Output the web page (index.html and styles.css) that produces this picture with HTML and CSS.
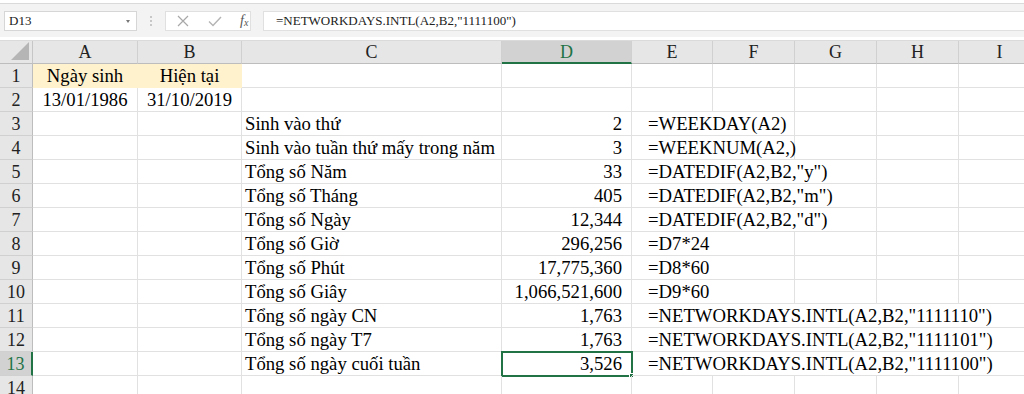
FILE: index.html
```html
<!DOCTYPE html>
<html>
<head>
<meta charset="utf-8">
<link rel="stylesheet" href="styles.css">
</head>
<body>
<div class="toolbar">
  <div class="namebox"><span class="nb-text">D13</span><span class="nb-arrow"></span></div>
  <div class="dots"><i></i><i></i><i></i></div>
  <div class="fxgroup">
    <svg class="ic" width="14" height="14" viewBox="0 0 14 14"><path d="M2 2L12 12M12 2L2 12" stroke="#a8a8a8" stroke-width="1.2" fill="none"/></svg>
    <svg class="ic" width="16" height="14" viewBox="0 0 16 14"><path d="M2 7.5L6 11.5L14 3" stroke="#b4b4b4" stroke-width="1.4" fill="none"/></svg>
    <span class="fx">f<sub>x</sub></span>
  </div>
  <div class="formula">=NETWORKDAYS.INTL(A2,B2,"1111100")</div>
</div>
<div class="sheet">
  <div class="corner"><span class="tri"></span></div>
  <div class="hdr">A</div><div class="hdr">B</div><div class="hdr">C</div><div class="hdr hsel">D</div><div class="hdr">E</div><div class="hdr">F</div><div class="hdr">G</div><div class="hdr">H</div><div class="hdr">I</div>

  <div class="rh">1</div><div class="c ctr fill">Ngày sinh</div><div class="c ctr fill">Hiện tại</div><div class="c"></div><div class="c"></div><div class="c"></div><div class="c"></div><div class="c"></div><div class="c"></div><div class="c"></div>

  <div class="rh">2</div><div class="c ctr">13/01/1986</div><div class="c ctr">31/10/2019</div><div class="c"></div><div class="c"></div><div class="c"></div><div class="c"></div><div class="c"></div><div class="c"></div><div class="c"></div>

  <div class="rh">3</div><div class="c"></div><div class="c"></div><div class="c">Sinh vào thứ</div><div class="c r">2</div><div class="c e s2">=WEEKDAY(A2)</div><div class="c"></div><div class="c"></div><div class="c"></div>

  <div class="rh">4</div><div class="c"></div><div class="c"></div><div class="c">Sinh vào tuần thứ mấy trong năm</div><div class="c r">3</div><div class="c e s2">=WEEKNUM(A2,)</div><div class="c"></div><div class="c"></div><div class="c"></div>

  <div class="rh">5</div><div class="c"></div><div class="c"></div><div class="c">Tổng số Năm</div><div class="c r">33</div><div class="c e s3">=DATEDIF(A2,B2,"y")</div><div class="c"></div><div class="c"></div>

  <div class="rh">6</div><div class="c"></div><div class="c"></div><div class="c">Tổng số Tháng</div><div class="c r">405</div><div class="c e s3">=DATEDIF(A2,B2,"m")</div><div class="c"></div><div class="c"></div>

  <div class="rh">7</div><div class="c"></div><div class="c"></div><div class="c">Tổng số Ngày</div><div class="c r">12,344</div><div class="c e s3">=DATEDIF(A2,B2,"d")</div><div class="c"></div><div class="c"></div>

  <div class="rh">8</div><div class="c"></div><div class="c"></div><div class="c">Tổng số Giờ</div><div class="c r">296,256</div><div class="c e s2">=D7*24</div><div class="c"></div><div class="c"></div><div class="c"></div>

  <div class="rh">9</div><div class="c"></div><div class="c"></div><div class="c">Tổng số Phút</div><div class="c r">17,775,360</div><div class="c e s2">=D8*60</div><div class="c"></div><div class="c"></div><div class="c"></div>

  <div class="rh">10</div><div class="c"></div><div class="c"></div><div class="c">Tổng số Giây</div><div class="c r">1,066,521,600</div><div class="c e s2">=D9*60</div><div class="c"></div><div class="c"></div><div class="c"></div>

  <div class="rh">11</div><div class="c"></div><div class="c"></div><div class="c">Tổng số ngày CN</div><div class="c r">1,763</div><div class="c e s5">=NETWORKDAYS.INTL(A2,B2,"1111110")</div>

  <div class="rh">12</div><div class="c"></div><div class="c"></div><div class="c">Tổng số ngày T7</div><div class="c r">1,763</div><div class="c e s5">=NETWORKDAYS.INTL(A2,B2,"1111101")</div>

  <div class="rh rsel">13</div><div class="c"></div><div class="c"></div><div class="c">Tổng số ngày cuối tuần</div><div class="c r sel">3,526</div><div class="c e s5">=NETWORKDAYS.INTL(A2,B2,"1111100")</div>

  <div class="rh">14</div><div class="c"></div><div class="c"></div><div class="c"></div><div class="c"></div><div class="c"></div><div class="c"></div><div class="c"></div><div class="c"></div><div class="c"></div>
</div>
</body>
</html>
```

FILE: styles.css
```css
html, body {
  margin: 0;
  padding: 0;
  background: #ffffff;
  overflow: hidden;
  width: 1024px;
  height: 394px;
  font-family: "Liberation Serif", "Times New Roman", serif;
  color: #000;
}

.toolbar {
  height: 37px;
  box-sizing: border-box;
  background: #f3f3f3;
  border-top: 3px solid #ffffff;
  display: flex;
  align-items: flex-start;
  padding-top: 8px;
  padding-left: 4px;
  position: relative;
}
.toolbar::before {
  content: "";
  position: absolute;
  left: 0; right: 0; top: 0;
  height: 1px;
  background: #dadada;
}

.namebox {
  width: 133px;
  height: 20px;
  box-sizing: border-box;
  background: #fff;
  border: 1px solid #d6d6d6;
  display: flex;
  align-items: center;
  justify-content: space-between;
  padding: 0 6px 0 4px;
  font-size: 13px;
  color: #222;
}
.nb-arrow {
  width: 0; height: 0;
  border-left: 2.5px solid transparent;
  border-right: 2.5px solid transparent;
  border-top: 3px solid #777;
}

.dots {
  width: 28px;
  height: 20px;
  display: flex;
  flex-direction: column;
  align-items: center;
  justify-content: center;
  gap: 2px;
}
.dots i {
  display: block;
  width: 2px; height: 2px;
  background: #b8b8b8;
  border-radius: 1px;
}

.fxgroup {
  width: 86px;
  height: 20px;
  box-sizing: border-box;
  background: #fff;
  border: 1px solid #e0e0e0;
  display: flex;
  align-items: center;
  padding-left: 10px;
  gap: 17px;
}
.fx {
  font-style: italic;
  font-size: 14px;
  color: #555;
  line-height: 1;
}
.fx sub { font-size: 10px; vertical-align: -1px; }

.formula {
  margin-left: 12px;
  flex: 1;
  height: 20px;
  box-sizing: border-box;
  background: #fff;
  border: 1px solid #e0e0e0;
  border-right: none;
  padding-left: 12px;
  font-size: 13px;
  line-height: 18px;
  color: #222;
}

.sheet {
  margin-top: 3px;
  display: grid;
  width: 1041px;
  grid-template-columns: 33px 105px 104px 260px 130px 81px 82px 82px 82px 82px;
  grid-template-rows: 23px repeat(14, 24px);
  border-top: 1px solid #dadada;
  background: #fff;
}

.corner {
  background: #e6e6e6;
  border-right: 1px solid #c6c6c6;
  border-bottom: 1px solid #bdbdbd;
  position: relative;
}
.tri {
  position: absolute;
  right: 3px; bottom: 3px;
  width: 0; height: 0;
  border-left: 18px solid transparent;
  border-bottom: 18px solid #b5b5b5;
}

.hdr {
  background: #e6e6e6;
  border-right: 1px solid #d0d0d0;
  border-bottom: 1px solid #bdbdbd;
  font-size: 18px;
  line-height: 20px;
  display: flex;
  align-items: flex-end;
  justify-content: center;
  padding-bottom: 1px;
  color: #222;
  box-sizing: border-box;
}
.hsel {
  background: #d2d2d2;
  color: #217346;
  border-bottom: 2px solid #217346;
  padding-bottom: 0;
}

.rh {
  background: #e6e6e6;
  border-right: 1px solid #bdbdbd;
  border-bottom: 1px solid #d0d0d0;
  font-size: 18px;
  line-height: 20px;
  display: flex;
  align-items: flex-end;
  justify-content: center;
  padding-bottom: 1px;
  color: #222;
  box-sizing: border-box;
}
.rsel {
  background: #d2d2d2;
  color: #217346;
  border-right: 2px solid #217346;
}

.c {
  border-right: 1px solid #e1e1e1;
  border-bottom: 1px solid #e1e1e1;
  box-sizing: border-box;
  font-size: 18.7px;
  display: flex;
  align-items: flex-end;
  padding: 0 3px 1px 3px;
  white-space: nowrap;
  line-height: 21px;
  position: relative;
}
.ctr { justify-content: center; }
.r { justify-content: flex-end; padding-right: 9px; }
.e { padding-left: 16px; }
.s2 { grid-column: span 2; }
.s3 { grid-column: span 3; }
.s5 { grid-column: span 5; }

.fill {
  background: #fff2cc;
  border-right-color: #fff2cc;
  border-bottom-color: #fff2cc;
}

.sel {
  outline: 2px solid #217346;
  outline-offset: -1px;
}
.sel::after {
  content: "";
  position: absolute;
  right: -3px;
  bottom: -3px;
  width: 5px;
  height: 5px;
  background: #217346;
  border: 1px solid #fff;
  box-sizing: border-box;
}
```
